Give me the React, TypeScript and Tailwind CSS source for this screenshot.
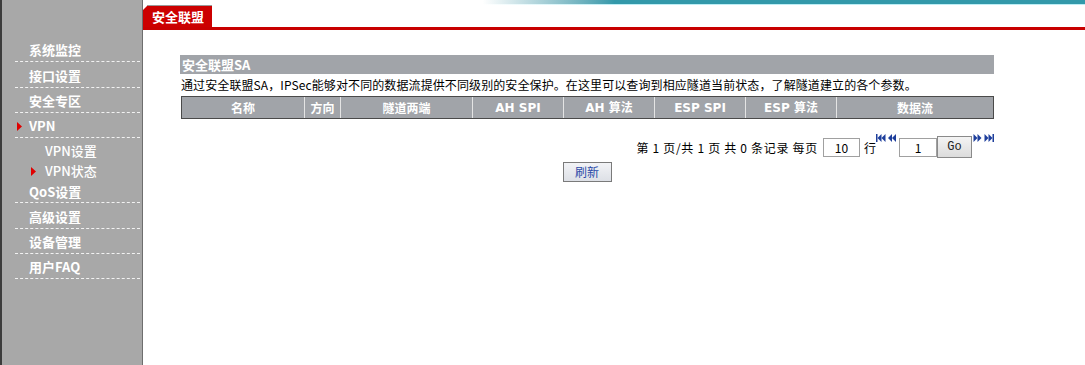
import React from "react";

type NavItem = { label: string; h: string; pb: string; active?: boolean; sub?: { label: string; active?: boolean }[] };

// row heights follow the screenshot (rows are ~25.3px apart)
const nav: NavItem[] = [
  { label: "系统监控", h: "h-[25px]", pb: "pb-[1px]" },
  { label: "接口设置", h: "h-[26px]", pb: "pb-[1px]" },
  { label: "安全专区", h: "h-[25px]", pb: "pb-[1px]" },
  { label: "VPN", h: "h-[25px]", pb: "pb-[1px]", active: true, sub: [{ label: "VPN设置" }, { label: "VPN状态", active: true }] },
  { label: "QoS设置", h: "h-[22px]", pb: "pb-0" },
  { label: "高级设置", h: "h-[26px]", pb: "pb-[1px]" },
  { label: "设备管理", h: "h-[25px]", pb: "pb-[1px]" },
  { label: "用户FAQ", h: "h-[25px]", pb: "pb-[1px]" },
];

const cols = [
  { label: "名称", w: "w-[123px]" },
  { label: "方向", w: "w-[36px]" },
  { label: "隧道两端", w: "w-[132px]" },
  { label: "AH SPI", w: "w-[91px]" },
  { label: "AH 算法", w: "w-[91px]" },
  { label: "ESP SPI", w: "w-[91px]" },
  { label: "ESP 算法", w: "w-[91px]" },
  { label: "数据流", w: "w-[157px]" },
];

function Arrow() {
  return (
    <svg width="5" height="9" viewBox="0 0 5 9" className="shrink-0">
      <path d="M0 0 L5 4.5 L0 9 Z" fill="#e00000" />
    </svg>
  );
}

function PageIcon({ dir, bar }: { dir: "l" | "r"; bar?: boolean }) {
  const left = dir === "l";
  return (
    <svg width="10" height="8" viewBox="0 0 10 8" className="shrink-0">
      {left ? (
        <g fill="#1e3f9c">
          {bar && <rect x="0" y="0" width="1.5" height="8" />}
          <path d={bar ? "M1.5 4 L5.5 0 L5.5 8 Z" : "M1 4 L5 0 L5 8 Z"} />
          <path d={bar ? "M5.5 4 L9.5 0 L9.5 8 Z" : "M5 4 L9 0 L9 8 Z"} />
        </g>
      ) : (
        <g fill="#1e3f9c">
          <path d="M0.5 0 L4.5 4 L0.5 8 Z" />
          <path d="M4.5 0 L8.5 4 L4.5 8 Z" />
          {bar && <rect x="8.5" y="0" width="1.5" height="8" />}
        </g>
      )}
    </svg>
  );
}

export default function App() {
  const cjk = { fontFamily: '"Noto Sans CJK SC", "Noto Sans", sans-serif' };
  return (
    <div className="flex h-[365px] w-[1085px] bg-white overflow-hidden" style={cjk}>
      <aside className="w-[143px] shrink-0 bg-[#a8a8a8] border-l-2 border-l-[#3c3c3c] border-r border-r-[#6e6e6e] pt-[37px]">
        {nav.map((n) => (
          <div key={n.label}>
            <div
              className={`${n.h} ${n.pb} ml-[13px] mr-[2px] border-b border-dashed border-[#f2f2f2] flex items-end text-[13px] font-bold text-white`}
            >
              <span className="w-[14px] pl-[2px] h-[20px] flex items-center">{n.active && <Arrow />}</span>
              <span className="leading-[20px]">{n.label}</span>
            </div>
            {n.sub && (
              <div className="pt-[3px]">
                {n.sub.map((s) => (
                  <div key={s.label} className="h-[20px] flex items-center pl-[29px] text-[13px] text-white font-medium">
                    <span className="w-[14px] flex">{s.active && <Arrow />}</span>
                    <span>{s.label}</span>
                  </div>
                ))}
              </div>
            )}
          </div>
        ))}
      </aside>

      <main className="flex-1 flex flex-col">
        <div className="h-[4px] bg-linear-to-r from-white from-[36%] to-[#3399aa] to-[50%]" />
        <div className="h-px bg-linear-to-r from-white from-[36%] to-[#bdeef5] to-[50%]" />
        <div className="flex h-[22px]">
          <div className="w-[69px] bg-[#cc0000] border-t border-[#9a9a9a] text-white text-[13px] font-bold flex items-center pl-[9px] [clip-path:polygon(5px_0,100%_0,100%_100%,0_100%,0_5px)]">
            安全联盟
          </div>
        </div>
        <div className="h-[3px] bg-[#c80000]" />

        <div className="pl-[37px] pr-[92px] pt-[25px]">
          <div className="h-[19px] bg-[#a1a4a9] text-white text-[13px] font-bold flex items-center pl-[2px]">安全联盟SA</div>
          <div className="h-[22px] flex items-center pl-px text-[12px] text-black whitespace-nowrap tracking-[0.1px]">
            通过安全联盟SA，IPSec能够对不同的数据流提供不同级别的安全保护。在这里可以查询到相应隧道当前状态，了解隧道建立的各个参数。
          </div>
          <table className="ml-px w-[812px] table-fixed border-collapse border border-[#4a4a4a]">
            <thead>
              <tr className="h-[22px] bg-[#a1a4a9]">
                {cols.map((c, i) => (
                  <th
                    key={c.label}
                    className={`${c.w} p-0 text-[12px] font-bold text-white text-center border-y border-[#4a4a4a] ${
                      i > 0 ? "border-l border-l-[#e4e4e4]" : ""
                    }`}
                    style={/[A-Z]/.test(c.label) ? { fontFamily: '"DejaVu Sans", "Noto Sans CJK SC", sans-serif' } : undefined}
                  >
                    {c.label}
                  </th>
                ))}
              </tr>
            </thead>
          </table>

          <div className="mt-[15px] h-[24px] flex justify-end items-start text-[12px] text-black">
            <span className="mt-[4px] leading-[19px] whitespace-nowrap tracking-[0.7px]">第 1 页/共 1 页 共 0 条记录 每页</span>
            <div className="ml-[5px] mt-[4px] w-[37px] h-[19px] border border-[#a0a0a0] flex items-center justify-center text-[12px]">10</div>
            <span className="ml-[4px] mt-[4px] leading-[19px]">行</span>
            <div className="flex gap-[1px]">
              <PageIcon dir="l" bar />
              <PageIcon dir="l" />
            </div>
            <div className="ml-[2px] mt-[4px] w-[38px] h-[19px] border border-[#a0a0a0] flex items-center justify-center text-[12px]">1</div>
            <button className="mt-[2px] w-[35px] h-[22px] border border-[#8a8a8a] bg-linear-to-b from-[#f4f4f4] to-[#dcdcdc] text-[12px] text-[#222]" style={{ fontFamily: '"Liberation Mono", monospace' }}>
              Go
            </button>
            <div className="flex gap-[1px] ml-[1px]">
              <PageIcon dir="r" />
              <PageIcon dir="r" bar />
            </div>
          </div>

          <div className="mt-[4px] flex justify-center">
            <button className="w-[49px] h-[20px] border border-[#7a7a7a] bg-linear-to-b from-[#f2f3f6] to-[#dde0e6] text-[12px] text-[#2a4aa8] leading-none">
              刷新
            </button>
          </div>
        </div>
      </main>
    </div>
  );
}
